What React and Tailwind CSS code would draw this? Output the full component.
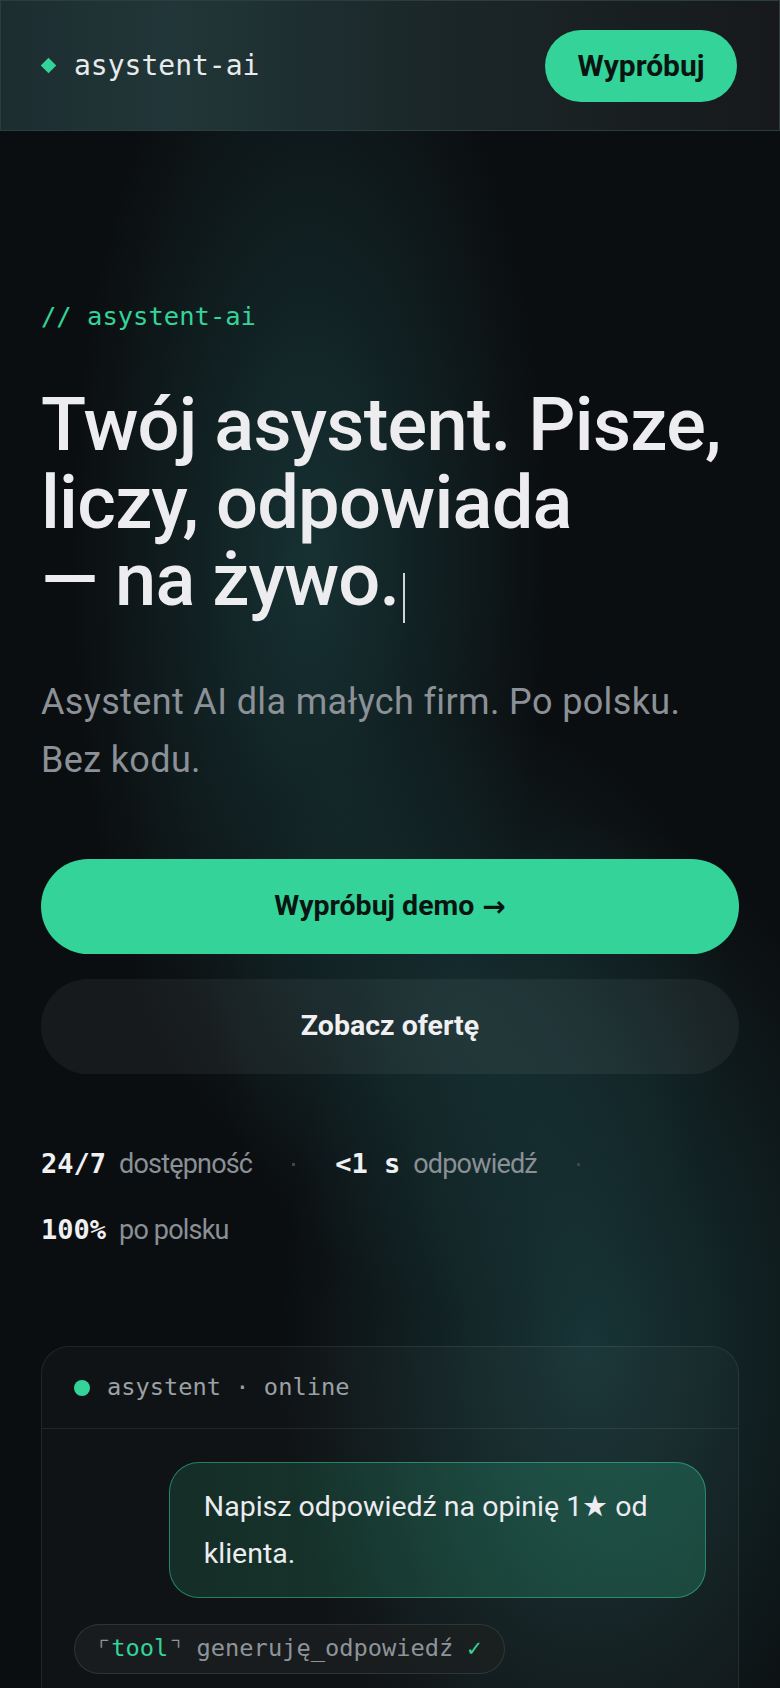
import React from 'react';

const mono = "font-['DejaVu_Sans_Mono',monospace]";

const Stat = ({ value, label }) => (
  <span className="flex items-baseline gap-[13px] leading-[34px]">
    <span className={`${mono} text-[27px] font-bold text-[#f0f0f2]`}>{value}</span>
    <span className="text-[27px] tracking-[-0.03em] text-[#8a9096]">{label}</span>
  </span>
);

const Dot = () => <span className="w-[3px] h-[3px] bg-[#3a4648]" />;

export default function App() {
  return (
    <div className="min-h-screen bg-[#0b0e10] bg-[radial-gradient(ellipse_240px_620px_at_310px_560px,rgba(32,78,80,0.55),transparent),radial-gradient(ellipse_310px_520px_at_590px_1340px,rgba(32,78,80,0.6),transparent),radial-gradient(ellipse_260px_300px_at_470px_1010px,rgba(32,78,80,0.4),transparent)] font-['Roboto',sans-serif] text-[#ececf1]">
      {/* Top bar */}
      <header className="h-[131px] px-[42px] flex items-center justify-between border border-[#2b3d3d] bg-[linear-gradient(90deg,#1c2d30_0%,#213638_22%,#1b2729_55%,#17191b_100%)]">
        <div className="flex items-center gap-[20px]">
          <span className="w-[11px] h-[11px] bg-[#34d399] rotate-45" />
          <span className={`${mono} text-[28px] text-[#e8eaec]`}>asystent-ai</span>
        </div>
        <button className="h-[72px] w-[192px] rounded-full bg-[#34d399] text-[#0a1410] text-[30px] font-bold">
          Wypróbuj
        </button>
      </header>

      <main className="px-[41px] pt-[166px] pb-[40px]">
        {/* Hero */}
        <p className={`${mono} text-[25.5px] leading-[38px] text-[#34d399]`}>// asystent-ai</p>

        <h1 className="mt-[51px] text-[74px] leading-[77.5px] font-medium tracking-[-0.01em] text-[#ededf0]">
          Twój asystent. Pisze,
          <br />
          liczy, odpowiada
          <br />
          — na żywo.
          <span className="inline-block w-[2px] h-[50px] bg-[#d4d4d8] ml-[4px] align-[-18px]" />
        </h1>

        <p className="mt-[50px] text-[36px] leading-[58px] tracking-[0.01em] text-[#8b9197]">
          Asystent AI dla małych firm. Po polsku.
          <br />
          Bez kodu.
        </p>

        {/* Actions */}
        <div className="mt-[70px] flex flex-col gap-[25px]">
          <button className="h-[95px] rounded-full bg-[#34d399] text-[#0a1410] text-[28.5px] font-bold flex items-center justify-center gap-[8px]">
            Wypróbuj demo
            <span className="font-['DejaVu_Sans',sans-serif] text-[28px]">→</span>
          </button>
          <button className="h-[95px] rounded-full bg-white/[0.05] text-[#f0f0f2] text-[28.5px] font-bold">
            Zobacz ofertę
          </button>
        </div>

        {/* Stats */}
        <div className="mt-[73px] flex flex-wrap items-center gap-x-[40px] gap-y-[32px]">
          <Stat value="24/7" label="dostępność" />
          <Dot />
          <Stat value="<1 s" label="odpowiedź" />
          <Dot />
          <Stat value="100%" label="po polsku" />
        </div>

        {/* Chat preview */}
        <div className="mt-[99px] rounded-[28px] border border-white/[0.08] bg-white/[0.025] overflow-hidden">
          <div className="h-[82px] px-[32px] flex items-center gap-[17px] border-b border-white/[0.08]">
            <span className="w-4 h-4 rounded-full bg-[#34d399]" />
            <span className={`${mono} text-[23.7px] text-[#9ba1a5]`}>asystent · online</span>
          </div>
          <div className="px-[32px] pt-[33px] pb-[40px] flex flex-col gap-[26px]">
            <div className="self-end max-w-[85%] rounded-[30px] border border-[#34d399]/50 bg-[linear-gradient(90deg,rgba(52,211,153,0.14),rgba(52,211,153,0.22))] px-[34px] py-[20px] text-[28.5px] leading-[47px] text-[#ececf1]">
              Napisz odpowiedź na opinię 1★ od klienta.
            </div>
            <div className={`${mono} self-start h-[50px] px-[22px] flex items-center rounded-full border border-white/10 bg-[#1b1f21]/80 text-[23.7px] text-[#8e9499]`}>
              <span>⌜</span>
              <span className="text-[#34d399]">tool</span>
              <span>⌝</span>
              <span className="ml-[14px]">generuję_odpowiedź</span>
              <span className="ml-[14px] text-[#34d399]">✓</span>
            </div>
            <div className="h-[120px]" />
          </div>
        </div>
      </main>
    </div>
  );
}
